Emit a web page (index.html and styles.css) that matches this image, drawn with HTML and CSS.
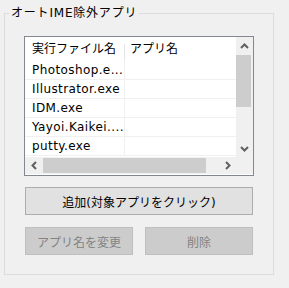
FILE: index.html
```
<!DOCTYPE html>
<html lang="ja">
<head>
    <meta charset="UTF-8">
    <title>オートIME除外アプリ</title>
    <link rel="stylesheet" href="styles.css">
</head>
<body>
    <!-- グループボックス -->
    <div class="group">
        <div class="group-title">オートIME除外アプリ</div>

        <!-- リストビュー -->
        <div class="list">
            <div class="list-body">
                <div class="list-head">
                    <div class="cell col1">実行ファイル名</div>
                    <div class="cell col2">アプリ名</div>
                </div>
                <div class="row"><div class="cell col1">Photoshop.e...</div><div class="cell col2"></div></div>
                <div class="row"><div class="cell col1">Illustrator.exe</div><div class="cell col2"></div></div>
                <div class="row"><div class="cell col1">IDM.exe</div><div class="cell col2"></div></div>
                <div class="row"><div class="cell col1">Yayoi.Kaikei....</div><div class="cell col2"></div></div>
                <div class="row"><div class="cell col1">putty.exe</div><div class="cell col2"></div></div>
            </div>

            <div class="vscroll">
                <div class="arrow">
                    <svg width="9" height="6" viewBox="0 0 9 6"><path d="M1 5 L4.5 1.5 L8 5" fill="none" stroke="#606060" stroke-width="2"/></svg>
                </div>
                <div class="vtrack"><div class="vthumb"></div></div>
                <div class="arrow">
                    <svg width="9" height="6" viewBox="0 0 9 6"><path d="M1 1 L4.5 4.5 L8 1" fill="none" stroke="#606060" stroke-width="2"/></svg>
                </div>
            </div>

            <div class="hscroll">
                <div class="arrow">
                    <svg width="6" height="9" viewBox="0 0 6 9"><path d="M5 1 L1.5 4.5 L5 8" fill="none" stroke="#606060" stroke-width="2"/></svg>
                </div>
                <div class="htrack"><div class="hthumb"></div></div>
                <div class="arrow">
                    <svg width="6" height="9" viewBox="0 0 6 9"><path d="M1 1 L4.5 4.5 L1 8" fill="none" stroke="#606060" stroke-width="2"/></svg>
                </div>
            </div>
            <div class="corner"></div>
        </div>

        <!-- ボタン -->
        <button class="btn btn-add">追加(対象アプリをクリック)</button>
        <div class="btn-row">
            <button class="btn" disabled>アプリ名を変更</button>
            <button class="btn" disabled>削除</button>
        </div>
    </div>
</body>
</html>
```

FILE: styles.css
```
/* 全体 */
body {
    margin: 0;
    background: #f0f0f0;
    font-family: "DejaVu Sans", "Noto Sans CJK JP", sans-serif;
    font-size: 12px;
    color: #000;
}

/* グループボックス */
.group {
    position: relative;
    box-sizing: border-box;
    width: 270px;
    height: 262px;
    margin: 13px 0 0 4px;
    border: 1px solid #dcdcdc;
    padding: 22px 0 0 19px;
}

.group-title {
    position: absolute;
    top: -9px;
    left: 4px;
    padding: 0 2px;
    background: #f0f0f0;
    line-height: 16px;
    letter-spacing: 0.8px;
}

/* リストビュー */
.list {
    box-sizing: border-box;
    width: 230px;
    height: 140px;
    border: 1px solid #828790;
    background: #fff;
    display: grid;
    grid-template-columns: 211px 17px;
    grid-template-rows: 120px 17px;
}

.list-body {
    overflow: hidden;
}

.list-head {
    display: flex;
    height: 24px;
}

.row {
    display: flex;
    height: 18px;
    border-bottom: 1px solid #f0f0f0;
}

.cell {
    white-space: nowrap;
    overflow: hidden;
    line-height: 18px;
}

.row .cell {
    letter-spacing: 0.4px;
}

.list-head .cell {
    line-height: 24px;
}

.col1 {
    width: 92px;
    padding-left: 7px;
    flex: none;
}

.col2 {
    flex: 1;
    padding-left: 5px;
    border-left: 1px solid #f0f0f0;
}

/* ヘッダーの区切り線 */
.list-head .col2 {
    position: relative;
    border-left: none;
    padding-left: 6px;
}

.list-head .col2::before {
    content: "";
    position: absolute;
    left: 0;
    top: 7px;
    bottom: 0;
    width: 1px;
    background: #e5e5e5;
}

/* スクロールバー */
.vscroll {
    display: flex;
    flex-direction: column;
    background: #f0f0f0;
}

.hscroll {
    display: flex;
    background: #f0f0f0;
}

.corner {
    background: #f0f0f0;
}

.arrow {
    width: 17px;
    height: 17px;
    flex: none;
    display: flex;
    align-items: center;
    justify-content: center;
}

.vtrack {
    flex: 1;
}

.vthumb {
    width: 15px;
    height: 52px;
    margin-top: 1px;
    background: #cdcdcd;
}

.htrack {
    flex: 1;
    display: flex;
    align-items: center;
}

.hthumb {
    height: 15px;
    width: 163px;
    margin-left: 1px;
    background: #cdcdcd;
}

/* ボタン */
.btn {
    box-sizing: border-box;
    height: 28px;
    border: 1px solid #adadad;
    background: #e1e1e1;
    font-family: inherit;
    font-size: 12px;
    color: #000;
    padding: 0;
}

.btn-add {
    display: block;
    width: 228px;
    margin: 11px 0 0 1px;
}

.btn-row {
    display: flex;
    gap: 12px;
    margin: 12px 0 0 1px;
}

.btn-row .btn {
    width: 108px;
}

.btn:disabled {
    background: #cccccc;
    border-color: #bfbfbf;
    color: #838383;
}
```
